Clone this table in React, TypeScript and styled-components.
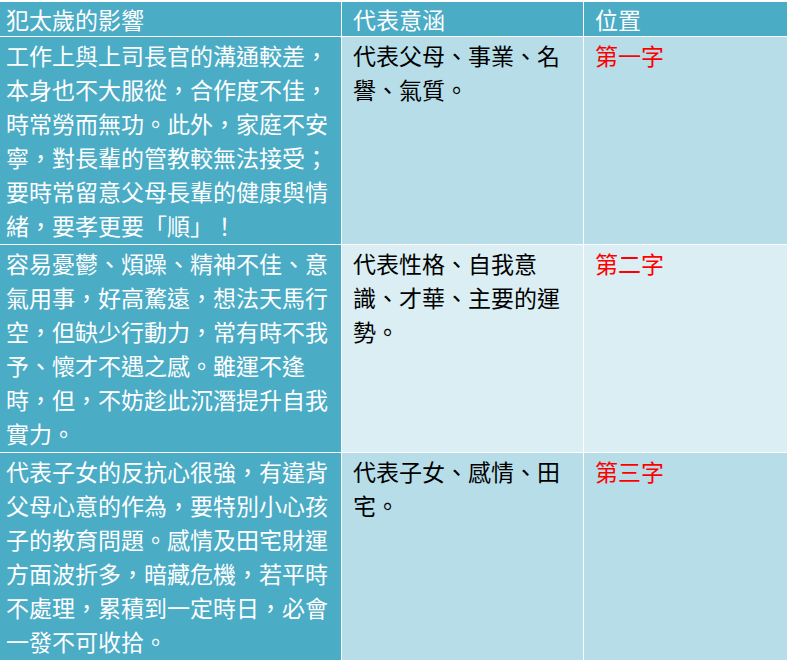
import React, { FC } from 'react';
import styled, { createGlobalStyle } from 'styled-components';

const GlobalStyle = createGlobalStyle`
  html, body {
    margin: 0;
    padding: 0;
    background: #ffffff;
  }
  body {
    font-family: "Noto Sans CJK TC", "Noto Sans CJK SC", sans-serif;
  }
`;

const Table = styled.div`
  margin-top: 2px;
  width: 787px;
  display: grid;
  grid-template-columns: 341px 241px 1fr;
  grid-template-rows: 34px auto auto auto;
  gap: 1px;
  background: #ffffff;
  font-size: 23px;
  line-height: 34px;
  text-spacing-trim: space-all;
`;

const HeadCell = styled.div<{ $first?: boolean }>`
  background: #4bacc6;
  color: #ffffff;
  padding: 0 ${({ $first }) => ($first ? '6px' : '11px')};
  white-space: nowrap;
`;

const Cell = styled.div<{ $kind: 'effect' | 'meaning' | 'place'; $alt?: boolean }>`
  background: ${({ $kind, $alt }) => {
    if ($kind === 'effect') return '#4bacc6';
    return $alt ? '#daeef3' : '#b6dde8';
  }};
  color: ${({ $kind }) => {
    if ($kind === 'effect') return '#ffffff';
    if ($kind === 'place') return '#ff0000';
    return '#000000';
  }};
  padding: 1px ${({ $kind }) => ($kind === 'effect' ? '6px' : '11px')} 2px;
  line-break: strict;
`;

type Row = {
  effect: string;
  meaning: string;
  place: string;
};

const rows: Row[] = [
  {
    effect: '工作上與上司長官的溝通較差，本身也不大服從，合作度不佳，時常勞而無功。此外，家庭不安寧，對長輩的管教較無法接受；要時常留意父母長輩的健康與情緒，要孝更要「順」！',
    meaning: '代表父母、事業、名譽、氣質。',
    place: '第一字',
  },
  {
    effect: '容易憂鬱、煩躁、精神不佳、意氣用事，好高騖遠，想法天馬行空，但缺少行動力，常有時不我予、懷才不遇之感。雖運不逢時，但，不妨趁此沉潛提升自我實力。',
    meaning: '代表性格、自我意識、才華、主要的運勢。',
    place: '第二字',
  },
  {
    effect: '代表子女的反抗心很強，有違背父母心意的作為，要特別小心孩子的教育問題。感情及田宅財運方面波折多，暗藏危機，若平時不處理，累積到一定時日，必會一發不可收拾。',
    meaning: '代表子女、感情、田宅。',
    place: '第三字',
  },
];

const App: FC = () => (
  <>
    <GlobalStyle />
    <Table lang='zh-Hant'>
      <HeadCell $first>犯太歲的影響</HeadCell>
      <HeadCell>代表意涵</HeadCell>
      <HeadCell>位置</HeadCell>
      {rows.map((row, i) => (
        <React.Fragment key={row.place}>
          <Cell $kind='effect'>{row.effect}</Cell>
          <Cell $kind='meaning' $alt={i % 2 === 1}>{row.meaning}</Cell>
          <Cell $kind='place' $alt={i % 2 === 1}>{row.place}</Cell>
        </React.Fragment>
      ))}
    </Table>
  </>
);

export default App;
